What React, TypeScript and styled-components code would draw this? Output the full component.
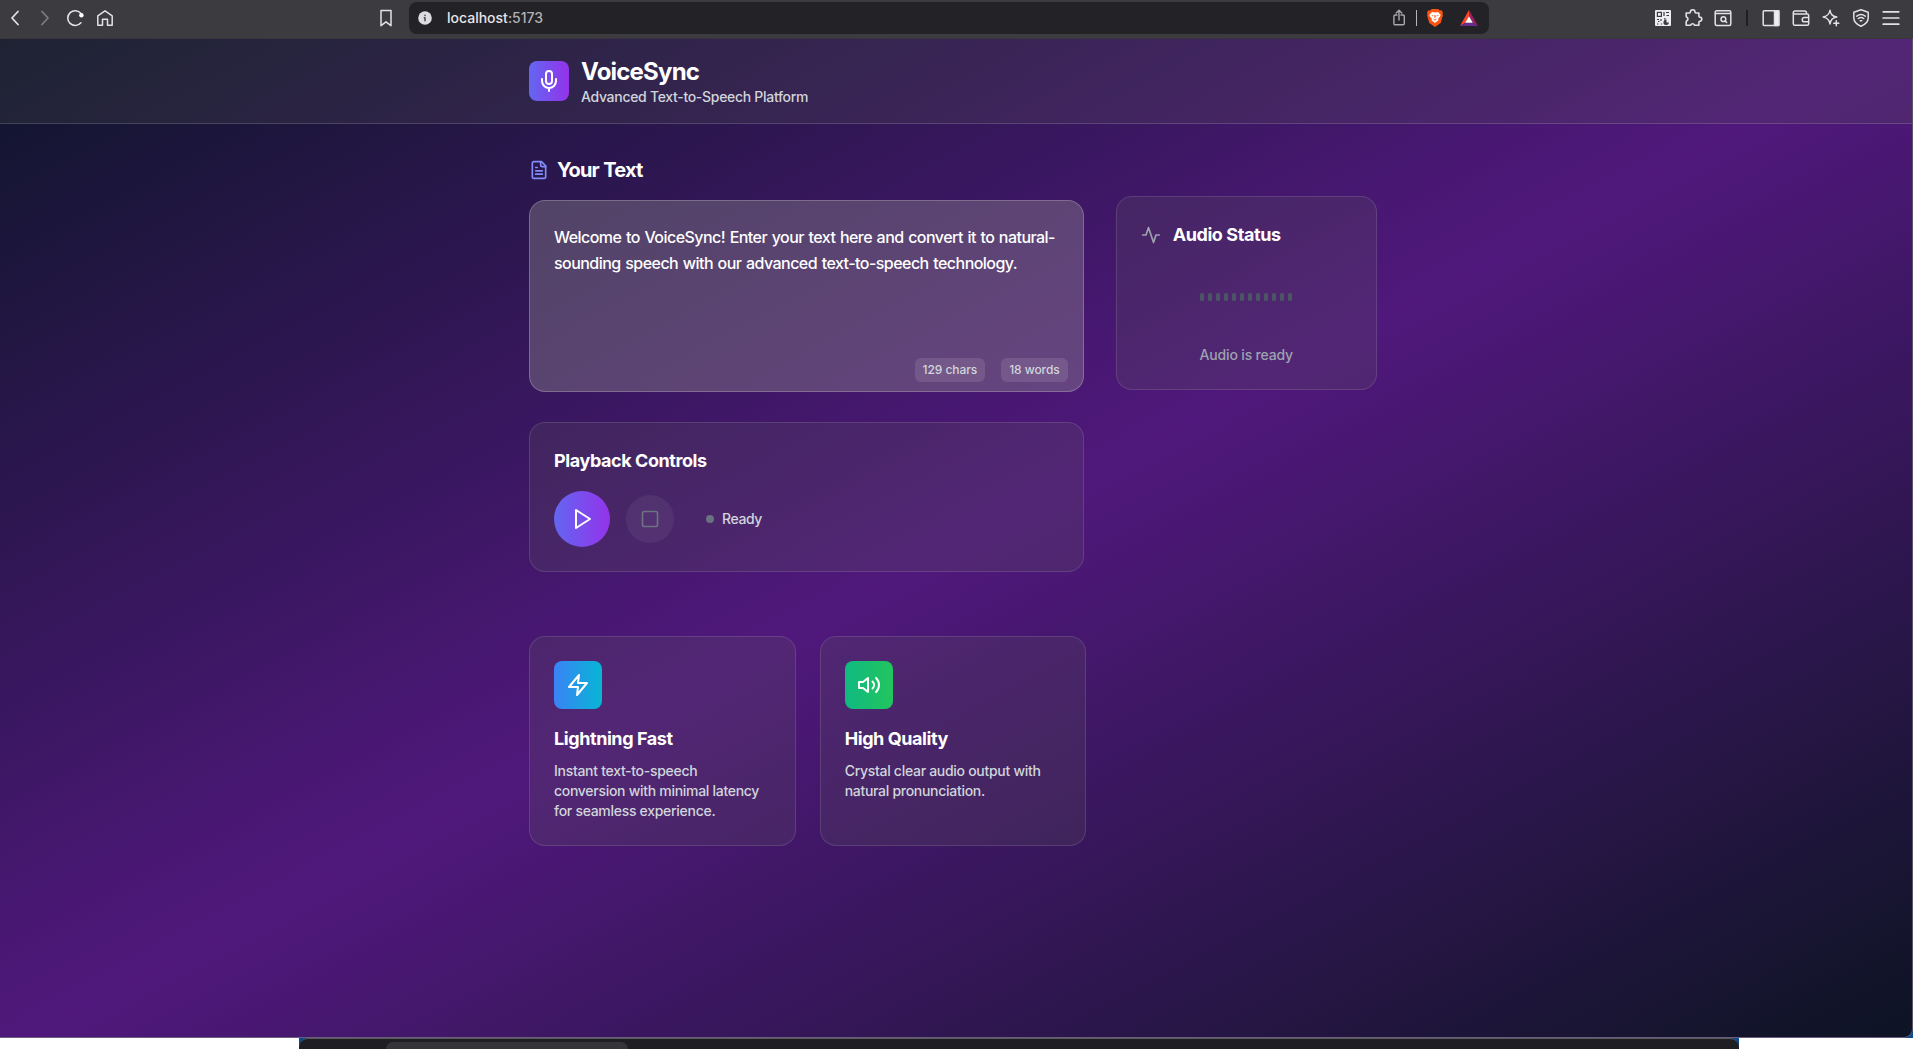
import React from "react";
import styled, { createGlobalStyle } from "styled-components";

const Global = createGlobalStyle`
  *, *::before, *::after { box-sizing: border-box; }
  body {
    margin: 0;
    overflow: hidden;
    background: #ffffff;
    font-family: Inter, "Liberation Sans", sans-serif;
    font-weight: 450;
    -webkit-font-smoothing: antialiased;
  }
  h1, h2, h3, p { margin: 0; }
`;

const Desktop = styled.div`
  width: 1913px;
  height: 1049px;
  display: flex;
  flex-direction: column;
  overflow: hidden;
  background: #ffffff;
`;

const Toolbar = styled.div`
  height: 38px;
  flex: none;
  display: flex;
  align-items: flex-start;
  justify-content: space-between;
  background: #3c3b3f;
`;

const ToolGroup = styled.div<{ $gap: number; $left?: number; $right?: number }>`
  height: 36px;
  display: flex;
  align-items: center;
  gap: ${(p) => p.$gap}px;
  padding-left: ${(p) => p.$left ?? 0}px;
  padding-right: ${(p) => p.$right ?? 0}px;
`;

const AddressArea = styled.div`
  flex: 1;
  display: flex;
  align-items: flex-start;
  padding-left: 265px;
`;

const AddressBar = styled.div`
  width: 1080px;
  height: 32px;
  margin: 2px 0 0 17px;
  padding: 0 11px 0 9px;
  display: flex;
  align-items: center;
  border-radius: 8px;
  background: #232227;
`;

const Url = styled.span`
  flex: 1;
  margin-left: 15px;
  font-size: 14px;
  line-height: 20px;
  color: #e6e5ea;
`;

const Port = styled.span`
  color: #b2b1b6;
`;

const Divider = styled.span<{ $color: string; $w: number; $box: number }>`
  width: ${(p) => p.$box}px;
  height: 16px;
  display: flex;
  justify-content: center;
  &::before {
    content: "";
    width: ${(p) => p.$w}px;
    background: ${(p) => p.$color};
  }
`;

const Glyph = styled.svg`
  flex: none;
  display: block;
  overflow: visible;
`;

const Viewport = styled.div`
  height: 1000px;
  flex: none;
  border-top: 1px solid #38353d;
  border-right: 1px solid #5c5368;
  border-bottom: 1px solid #6a5c7c;
  border-bottom-right-radius: 9px;
  background: linear-gradient(to bottom right, #0e152a, #50187c 50%, #0c1422) top left / 100% 1012px no-repeat;
`;

const Backdrop = styled.div`
  flex: none;
  background: linear-gradient(90deg, #fff 1800px, #0a4a92 1800px);
`;

const Header = styled.header`
  height: 85px;
  padding: 16px 0 0 529px;
  display: flex;
  align-items: flex-start;
  gap: 12px;
  border-bottom: 1px solid rgba(255, 255, 255, 0.15);
  background: rgba(95, 95, 88, 0.2);
`;

const LogoTile = styled.div`
  width: 40px;
  height: 40px;
  margin-top: 6px;
  display: flex;
  align-items: center;
  justify-content: center;
  border-radius: 8px;
  background: linear-gradient(to right, #6366f1, #9333ea);
`;

const Title = styled.h1`
  padding-top: 1px;
  margin-bottom: -1px;
  font-size: 24px;
  line-height: 32px;
  font-weight: 700;
  letter-spacing: -0.8px;
  color: #fff;
`;

const Subtitle = styled.p`
  font-size: 14px;
  line-height: 20px;
  letter-spacing: -0.3px;
  color: #d1d5db;
`;

const Main = styled.main`
  width: 1377px;
  padding: 32px 0 0 529px;
`;

const Workspace = styled.div`
  display: grid;
  grid-template-columns: 554.67px 261.33px;
  gap: 32px;
  align-items: start;
`;

const Column = styled.div`
  display: flex;
  flex-direction: column;
`;

const SectionHead = styled.div`
  height: 28px;
  display: flex;
  align-items: center;
  gap: 8px;
  margin-bottom: 16px;
`;

const SectionTitle = styled.h2`
  font-size: 20px;
  line-height: 28px;
  font-weight: 650;
  letter-spacing: -0.85px;
  word-spacing: 0.5px;
  color: #fff;
`;

const Editor = styled.div`
  height: 192px;
  padding: 23px 15px 9px 24px;
  display: flex;
  flex-direction: column;
  justify-content: space-between;
  border: 1px solid rgba(255, 255, 255, 0.22);
  border-radius: 16px;
  background: rgba(155, 153, 150, 0.35);
`;

const EditorText = styled.p`
  font-size: 16px;
  line-height: 26px;
  letter-spacing: -0.54px;
  word-spacing: 0.85px;
  white-space: nowrap;
  color: #fff;
`;

const Chips = styled.div`
  display: flex;
  justify-content: flex-end;
  gap: 16px;
`;

const Chip = styled.span`
  height: 24px;
  padding: 0 8px;
  border-radius: 6px;
  font-size: 12px;
  line-height: 24px;
  letter-spacing: -0.07px;
  color: #d1d5db;
  background: rgba(255, 255, 255, 0.11);
`;

const Card = styled.section<{ $h: number; $top?: number }>`
  height: ${(p) => p.$h}px;
  margin-top: ${(p) => p.$top ?? 0}px;
  padding: 24px;
  border: 1px solid rgba(255, 255, 255, 0.12);
  border-radius: 16px;
  background: rgba(95, 95, 88, 0.2);
`;

const CardTitle = styled.h3<{ $bottom: number }>`
  margin-bottom: ${(p) => p.$bottom}px;
  display: flex;
  align-items: center;
  gap: 12px;
  font-size: 18px;
  line-height: 28px;
  font-weight: 650;
  letter-spacing: -0.42px;
  color: #fff;
`;

const Controls = styled.div`
  display: flex;
  align-items: center;
  gap: 16px;
`;

const RoundButton = styled.button<{ $size: number; $bg: string; $nudge?: number }>`
  width: ${(p) => p.$size}px;
  height: ${(p) => p.$size}px;
  padding: 0 0 0 ${(p) => p.$nudge ?? 0}px;
  display: flex;
  align-items: center;
  justify-content: center;
  border: 0;
  border-radius: 50%;
  background: ${(p) => p.$bg};
`;

const ReadyState = styled.div`
  margin-left: 16px;
  display: flex;
  align-items: center;
  gap: 8px;
  font-size: 14px;
  line-height: 20px;
  letter-spacing: -0.4px;
  color: #d1d5db;
`;

const Dot = styled.span`
  width: 8px;
  height: 8px;
  border-radius: 50%;
  background: #6b7280;
`;

const Bars = styled.div`
  height: 64px;
  display: flex;
  align-items: center;
  justify-content: center;
  gap: 4px;
`;

const Bar = styled.span`
  width: 4px;
  height: 8px;
  border-radius: 1.5px;
  background: #4b5563;
`;

const AudioNote = styled.p`
  margin-top: 16px;
  font-size: 14px;
  line-height: 20px;
  letter-spacing: -0.17px;
  text-align: center;
  color: #9ca3af;
`;

const Features = styled.div`
  margin-top: 64px;
  display: grid;
  grid-template-columns: repeat(3, 1fr);
  gap: 24px;
`;

const FeatureTile = styled.div<{ $from: string; $to: string }>`
  width: 48px;
  height: 48px;
  margin-bottom: 16px;
  display: flex;
  align-items: center;
  justify-content: center;
  border-radius: 8px;
  background: linear-gradient(to right, ${(p) => p.$from}, ${(p) => p.$to});
`;

const FeatureText = styled.p`
  font-size: 14px;
  line-height: 20px;
  letter-spacing: -0.29px;
  white-space: nowrap;
  color: #d1d5db;
`;

const LowerScreen = styled.div`
  flex: 1;
  display: flex;
  padding-left: 299px;
`;

const WindowCorner = styled.div`
  width: 1440px;
  height: 11px;
  background: #0a4a92;
`;

const BackWindow = styled.div`
  height: 11px;
  padding: 3px 0 0 87px;
  border-top: 1px solid #5a595e;
  border-radius: 9px 9px 0 0;
  background: #1f1e22;
`;

const BackTab = styled.div`
  width: 242px;
  height: 7px;
  border-radius: 7px 7px 0 0;
  background: #353438;
`;

type LineIconProps = {
  w?: number;
  h?: number;
  box?: string;
  color?: string;
  stroke?: number;
  children: React.ReactNode;
};

const LineIcon = ({ w = 20, h = 20, box, color = "#e2e1e6", stroke = 1.5, children }: LineIconProps) => (
  <Glyph
    width={w}
    height={h}
    viewBox={box ?? `0 0 ${w} ${h}`}
    fill="none"
    stroke={color}
    strokeWidth={stroke}
    strokeLinecap="round"
    strokeLinejoin="round"
  >
    {children}
  </Glyph>
);

const BraveLion = () => (
  <Glyph width="16" height="18" viewBox="0 0 16 18">
    <path d="M4.7 0h6.6l1.4 1.5 1.8-.2L16 3.6l-.5 1.5.4 1.2-2.2 7.6L8 18l-5.7-4.1L.1 6.3l.4-1.2L0 3.6l1.5-2.3 1.8.2z" fill="#fb5412" />
    <path d="M5 2.9l3 .5 3-.5 2.6 2.8-.7 2-1.7 2.1.3 1.5L8 13.9l-3.5-2.6.3-1.5-1.7-2.1-.7-2z" fill="#fff" />
    <path d="M4 5.9l2.6.6-.5 1.1zM12 5.9l-2.6.6.5 1.1zM7.3 6.2h1.4l-.3 3H7.6zM6 9.7l2 .9 2-.9-1.3 1.6H7.3z" fill="#fb5412" />
  </Glyph>
);

const BatTriangle = () => (
  <Glyph width="18" height="16" viewBox="0 0 18 16">
    <path d="M9 0L0 16l5.2-3.2L9 6.3z" fill="#ff4724" />
    <path d="M9 0l9 16-5.2-3.2L9 6.3z" fill="#9e1f63" />
    <path d="M0 16h18l-5.2-3.2H5.2z" fill="#662d91" />
    <path d="M9 6.3l3.8 6.5H5.2z" fill="#fff" />
  </Glyph>
);

const QrIcon = () => (
  <Glyph width="20" height="20" viewBox="0 0 20 20">
    <rect x="2" y="2" width="16" height="16" rx="1" fill="#eeedf1" />
    <g fill="none" stroke="#3c3b3f" strokeWidth="1.2">
      <rect x="4.4" y="4.4" width="4" height="4" />
      <path d="M11 4v4M13 4.5h3M13.5 7.5h2.5M4 11.5h2M8 11v2M5 13.5h1.5M4 16h1.5M8.5 15.5v1M11 10.8h1.6" />
    </g>
    <path d="M13.5 11.5v3H16a2.8 2.8 0 1 1-2.5-3z" fill="#3c3b3f" />
  </Glyph>
);

const PlaybackControls = () => (
  <Card $h={150} $top={30}>
    <CardTitle $bottom={16}>Playback Controls</CardTitle>
    <Controls>
      <RoundButton $size={56} $nudge={2} $bg="linear-gradient(to right, #6366f1, #9333ea)">
        <LineIcon w={24} h={24} color="#fff" stroke={2}>
          <path d="M5 3l14 9-14 9z" />
        </LineIcon>
      </RoundButton>
      <RoundButton $size={48} $bg="rgba(255, 255, 255, 0.06)">
        <LineIcon box="0 0 24 24" color="#6b7280" stroke={2}>
          <rect x="3" y="3" width="18" height="18" rx="2" />
        </LineIcon>
      </RoundButton>
      <ReadyState>
        <Dot />
        Ready
      </ReadyState>
    </Controls>
  </Card>
);

const AudioStatus = () => (
  <Card $h={194} $top={40}>
    <CardTitle $bottom={16}>
      <LineIcon box="0 0 24 24" color="#9ca3af" stroke={2}>
        <path d="M22 12h-4l-3 9L9 3l-3 9H2" />
      </LineIcon>
      Audio Status
    </CardTitle>
    <Bars>
      {Array.from({ length: 12 }, (_, i) => (
        <Bar key={i} />
      ))}
    </Bars>
    <AudioNote>Audio is ready</AudioNote>
  </Card>
);

export default function App() {
  return (
    <Desktop>
      <Global />
      <Toolbar>
        <ToolGroup $gap={10} $left={5}>
          <LineIcon stroke={1.8}><path d="M13 3.5L7 10l6 6.5" /></LineIcon>
          <LineIcon stroke={1.8} color="#7d7c81"><path d="M7 3.5l6 6.5-6 6.5" /></LineIcon>
          <LineIcon stroke={1.6}>
            <path d="M15.9 14.8A7.4 7.4 0 1 1 16 5.5" />
            <circle cx="16.4" cy="7.2" r="2.2" fill="#fff" stroke="none" />
          </LineIcon>
          <LineIcon stroke={1.5}>
            <path d="M2.8 17.2V7.8L10 2.8l7.2 5v9.4h-4.7v-6h-5v6z" />
          </LineIcon>
        </ToolGroup>
        <AddressArea>
          <ToolGroup $gap={0}>
            <LineIcon w={12} h={20} stroke={1.5}><path d="M1 2.5h10v15.2L6 13.8l-5 3.9z" /></LineIcon>
          </ToolGroup>
          <AddressBar>
            <LineIcon w={14} h={14}>
              <circle cx="7" cy="7" r="6.8" fill="#dddce1" stroke="none" />
              <path d="M7 6.8v3M7 4.2v.2M6.3 6.8H7" stroke="#4a494e" />
            </LineIcon>
            <Url>localhost<Port>:5173</Port></Url>
            <ToolGroup $gap={0}>
              <LineIcon w={12} h={18} stroke={1.4} color="#aaa9ae">
                <path d="M4 6H2.2A1.3 1.3 0 0 0 .9 7.3v7.2a1.3 1.3 0 0 0 1.3 1.3H10a1.3 1.3 0 0 0 1.3-1.3V7.3A1.3 1.3 0 0 0 10 6H8M6 11V1.4M3.2 4L6 1.2 8.8 4" />
              </LineIcon>
              <Divider $color="#b5b4b9" $w={1} $box={22} />
              <BraveLion />
              <Divider $color="transparent" $w={1} $box={17} />
              <BatTriangle />
            </ToolGroup>
          </AddressBar>
        </AddressArea>
        <ToolGroup $gap={10} $right={12}>
          <QrIcon />
          <LineIcon stroke={1.6}>
            <path d="M3.2 5h3.3a.9.9 0 0 0 .9-.9 2.3 2.3 0 0 1 4.6 0 .9.9 0 0 0 .9.9h3v3.2c0 .5.4.8.8.9a2.1 2.1 0 0 1 0 4.2c-.4 0-.8.4-.8.9v3H12c-.5 0-.7-.5-1.1-.9a1.8 1.8 0 0 0-2.6 0c-.4.4-.6.9-1.1.9h-4v-3.7c0-.5.6-.7 1-1a1.9 1.9 0 0 0 0-3c-.4-.3-1-.5-1-1z" />
          </LineIcon>
          <LineIcon stroke={1.5}>
            <rect x="2.2" y="2.8" width="15.6" height="14.6" rx="1.5" />
            <path d="M2.5 5.6h15M12 13l1.6 1.4" />
            <circle cx="10.4" cy="11.2" r="2.4" />
          </LineIcon>
          <Divider $color="#202024" $w={2} $box={8} />
          <LineIcon stroke={1.5}>
            <rect x="2.2" y="2.8" width="15.6" height="14.6" rx="1" />
            <path d="M13.5 2.8h4.3v14.6h-4.3z" fill="#efeef3" />
          </LineIcon>
          <LineIcon stroke={1.5}>
            <path d="M15.5 5.8V5a2 2 0 0 0-2-2H3.8a1.5 1.5 0 0 0-1.5 1.5v11.2c0 1 .6 1.6 1.6 1.6h12.2c.9 0 1.6-.6 1.6-1.5V7.4c0-.9-.7-1.5-1.6-1.5H2.5M17.7 9.5h-4.4a2 2 0 0 0-2 2v.4c0 1 .8 1.8 1.9 1.8h4.5" />
          </LineIcon>
          <LineIcon stroke={1.5}>
            <path d="M9 2.3c.7 4.2 2.2 5.7 6.8 6.8-4.6 1-6 2.6-6.8 6.8-.9-4.2-2.4-5.8-6.8-6.8C6.6 8 8.1 6.5 9 2.3z" />
            <path d="M15.3 12.8v5M12.8 15.3h5" />
          </LineIcon>
          <LineIcon stroke={1.5}>
            <path d="M10 1.8l7.2 2.4v5.5c0 4.2-3 6.8-7.2 8.6-4.2-1.8-7.2-4.4-7.2-8.6V4.2z" />
            <path d="M5.8 8.2c2.6-2 5.8-2 8.4 0M7.3 10.5c1.8-1.3 3.6-1.3 5.4 0M9.2 12.7h1.6" />
          </LineIcon>
          <LineIcon stroke={1.7}>
            <path d="M2.2 3.8h15.6M2.2 10h15.6M2.2 16.2h15.6" />
          </LineIcon>
        </ToolGroup>
      </Toolbar>
      <Backdrop>
        <Viewport>
          <Header>
            <LogoTile>
              <LineIcon w={24} h={24} color="#fff" stroke={2}>
                <path d="M12 2a3 3 0 0 0-3 3v7a3 3 0 0 0 6 0V5a3 3 0 0 0-3-3zM19 10v2a7 7 0 0 1-14 0v-2M12 19v3" />
              </LineIcon>
            </LogoTile>
            <div>
              <Title>VoiceSync</Title>
              <Subtitle>Advanced Text-to-Speech Platform</Subtitle>
            </div>
          </Header>
          <Main>
            <Workspace>
              <Column>
                <SectionHead>
                  <LineIcon box="0 0 24 24" color="#818cf8" stroke={2}>
                    <path d="M15 2H6a2 2 0 0 0-2 2v16a2 2 0 0 0 2 2h12a2 2 0 0 0 2-2V7z" />
                    <path d="M14 2v4a2 2 0 0 0 2 2h4M10 9H8M16 13H8M16 17H8" />
                  </LineIcon>
                  <SectionTitle>Your Text</SectionTitle>
                </SectionHead>
                <Editor>
                  <EditorText>
                    Welcome to VoiceSync! Enter your text here and convert it to natural-
                    <br />
                    sounding speech with our advanced text-to-speech technology.
                  </EditorText>
                  <Chips>
                    <Chip>129 chars</Chip>
                    <Chip>18 words</Chip>
                  </Chips>
                </Editor>
                <PlaybackControls />
              </Column>
              <AudioStatus />
            </Workspace>
            <Features>
              <Card $h={210}>
                <FeatureTile $from="#3b82f6" $to="#06b6d4">
                  <LineIcon w={24} h={24} color="#fff" stroke={2}>
                    <path d="M13 2L3 14h9l-1 8 10-12h-9z" />
                  </LineIcon>
                </FeatureTile>
                <CardTitle $bottom={8}>Lightning Fast</CardTitle>
                <FeatureText>
                  Instant text-to-speech
                  <br />
                  conversion with minimal latency
                  <br />
                  for seamless experience.
                </FeatureText>
              </Card>
              <Card $h={210}>
                <FeatureTile $from="#10b981" $to="#22c55e">
                  <LineIcon w={24} h={24} color="#fff" stroke={2}>
                    <path d="M11 5L6 9H2v6h4l5 4zM15.54 8.46a5 5 0 0 1 0 7.07M19.07 4.93a10 10 0 0 1 0 14.14" />
                  </LineIcon>
                </FeatureTile>
                <CardTitle $bottom={8}>High Quality</CardTitle>
                <FeatureText>
                  Crystal clear audio output with
                  <br />
                  natural pronunciation.
                </FeatureText>
              </Card>
            </Features>
          </Main>
        </Viewport>
      </Backdrop>
      <LowerScreen>
        <WindowCorner>
          <BackWindow>
            <BackTab />
          </BackWindow>
        </WindowCorner>
      </LowerScreen>
    </Desktop>
  );
}
